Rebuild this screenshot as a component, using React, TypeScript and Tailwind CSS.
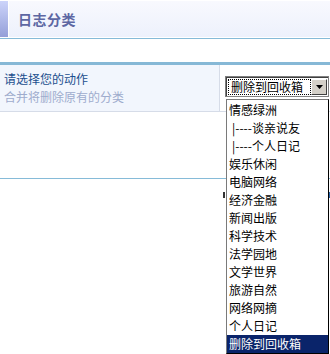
const options = [
  '情感绿洲',
  '|----谈亲说友',
  '|----个人日记',
  '娱乐休闲',
  '电脑网络',
  '经济金融',
  '新闻出版',
  '科学技术',
  '法学园地',
  '文学世界',
  '旅游自然',
  '网络网摘',
  '个人日记',
  '删除到回收箱',
];

const SELECTED = '删除到回收箱';

export default function App() {
  return (
    <div className="relative w-[330px] h-[354px] overflow-hidden bg-white font-['Noto_Sans_CJK_SC',sans-serif] text-[12px] leading-[18px] text-black">
      {/* page title */}
      <div className="pt-px">
        <div className="flex h-9">
          <div className="w-[8px] bg-gradient-to-b from-[#ccd4fa] to-[#959fd8]" />
          <div className="flex flex-1 items-center border-l border-white bg-gradient-to-b from-[#f8f9fe] to-[#edf1fc] pl-[9px] text-[14px] font-bold tracking-[0.5px] text-[#5d67a3]">
            日志分类
          </div>
        </div>
      </div>
      <div className="h-px" />
      <div className="h-px bg-[#86bbd8]" />

      <div className="h-[23px]" />
      <div className="h-[3px] bg-[#86b8d6]" />

      {/* action row */}
      <div className="flex h-[47px] border-b border-[#d6dce8]">
        <div className="w-[220px] border-r border-[#d6dce8] bg-[#f2f6fd] pl-[4px] pt-[5px]">
          <div className="text-[#1c4f8e]">请选择您的动作</div>
          <div className="text-[#9eaccd]">合并将删除原有的分类</div>
        </div>
        <div className="flex-1 pl-[5px] pt-[11px]">
          <div className="flex h-[21px] w-[104px] border border-[#808080] bg-white">
            <div className="flex flex-1 border-l border-t border-[#404040] p-px">
              <div className="flex flex-1 items-center border border-dotted border-black pl-[2px] leading-none">
                {SELECTED}
              </div>
              <div className="flex w-[16px] items-center justify-center border border-[#404040] border-l-white border-t-white bg-[#d4d0c8]">
                <svg width="7" height="4" viewBox="0 0 7 4">
                  <path d="M0 0h7L3.5 4z" fill="#000" />
                </svg>
              </div>
            </div>
          </div>
        </div>
      </div>

      <div className="h-[66px]" />
      <div className="h-px bg-[#86bbd8]" />
      <div className="h-[13px]" />
      <div className="ml-[223px] h-[6px] w-[107px] border-x-2 border-[#333333] border-r-[#2a64a8]" />

      {/* open dropdown list */}
      <div className="absolute left-[226px] top-[99px] w-[103px] border border-[#7a7a7a] border-b-black border-r-black bg-white pt-px">
        {options.map((opt) => (
          <div
            key={opt}
            className={
              'h-[18px] whitespace-nowrap ' +
              (opt === SELECTED ? 'bg-[#0a246a] pl-[2px] text-white ' : '') +
              (opt.startsWith('|') ? 'pl-[5px]' : 'pl-[2px]')
            }
          >
            {opt}
          </div>
        ))}
      </div>
    </div>
  );
}
